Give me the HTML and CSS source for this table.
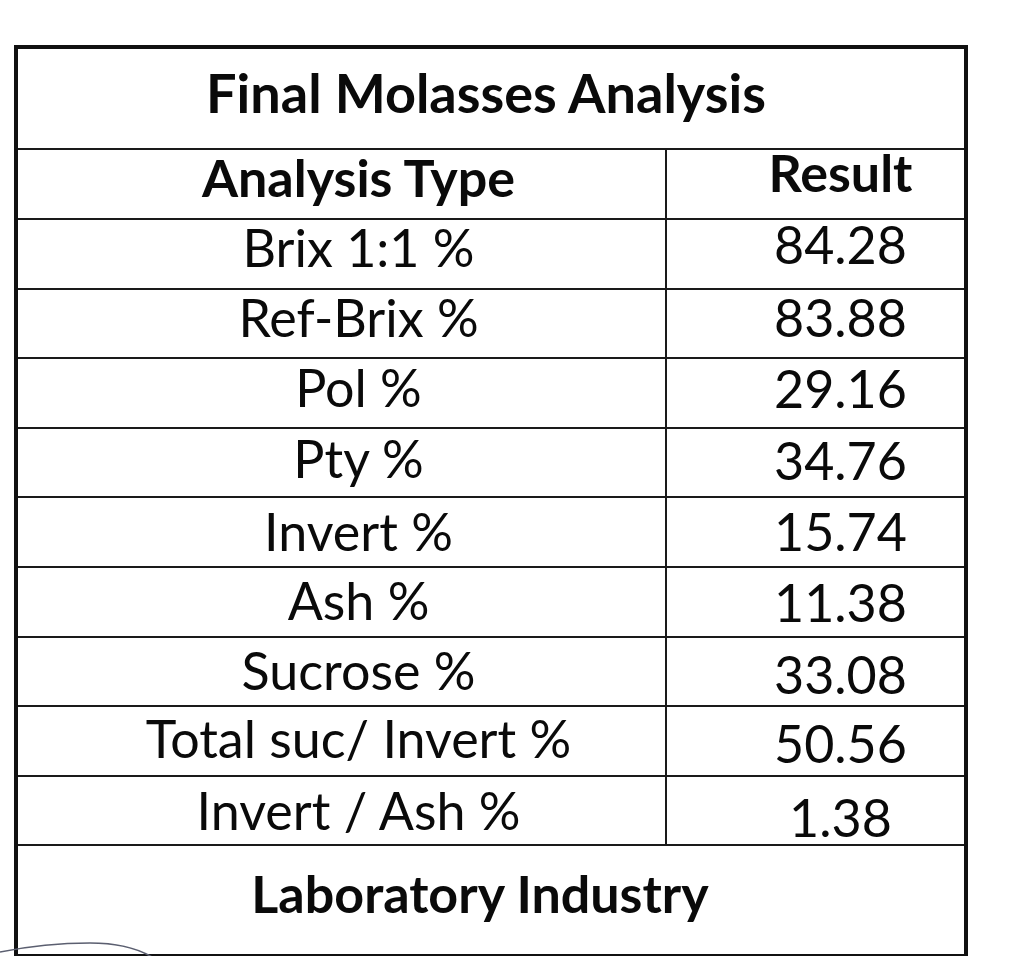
FILE: index.html
```html
<!DOCTYPE html>
<html lang="en">
<head>
<meta charset="utf-8">
<title>Final Molasses Analysis</title>
<link rel="stylesheet" href="styles.css">
</head>
<body>
<div class="page">
  <table class="sheet">
    <colgroup><col class="col-type"><col class="col-res"></colgroup>
    <tr class="title-row"><th colspan="2" class="title">Final Molasses Analysis</th></tr>
    <tr class="head-row"><th class="c-type">Analysis Type</th><th class="c-res">Result</th></tr>
    <tr class="row"><td class="c-type">Brix 1:1 %</td><td class="c-res">84.28</td></tr>
    <tr class="row"><td class="c-type">Ref-Brix %</td><td class="c-res">83.88</td></tr>
    <tr class="row"><td class="c-type">Pol %</td><td class="c-res">29.16</td></tr>
    <tr class="row"><td class="c-type">Pty %</td><td class="c-res">34.76</td></tr>
    <tr class="row"><td class="c-type">Invert %</td><td class="c-res">15.74</td></tr>
    <tr class="row"><td class="c-type">Ash %</td><td class="c-res">11.38</td></tr>
    <tr class="row"><td class="c-type">Sucrose %</td><td class="c-res">33.08</td></tr>
    <tr class="row"><td class="c-type">Total suc/ Invert %</td><td class="c-res">50.56</td></tr>
    <tr class="row"><td class="c-type">Invert / Ash %</td><td class="c-res">1.38</td></tr>
    <tr class="foot-row"><th colspan="2" class="foot">Laboratory Industry</th></tr>
  </table>
  <svg class="scribble" width="170" height="30" viewBox="0 0 170 30" aria-hidden="true">
    <path d="M0 24 C 30 18, 60 15, 90 15 C 115 15, 135 19, 152 29" fill="none" stroke="#5b5f70" stroke-width="1.6"/>
  </svg>
</div>
</body>
</html>
```
FILE: styles.css
```css
html, body {
  margin: 0;
  padding: 0;
  background: #ffffff;
}
body {
  width: 1010px;
  height: 956px;
  overflow: hidden;
  font-family: Lato, "Open Sans", "Liberation Sans", sans-serif;
  color: #0a0a0a;
}
.page {
  position: relative;
  padding: 45px 0 0 14px;
}
.sheet {
  border-collapse: collapse;
  width: 954px;
  border: 4px solid #111;
  table-layout: fixed;
}
.col-type { width: 650px; }
.sheet th, .sheet td {
  border: 2px solid #1a1a1a;
  padding: 0 0 3px 0;
  text-align: center;
  vertical-align: middle;
  font-size: 52px;
  line-height: 40px;
  white-space: nowrap;
}
.sheet th { font-weight: 700; }
.sheet td { font-weight: 400; }
.c-type { padding-left: 34px !important; }
.c-res { padding-left: 50px !important; }

.title-row { height: 102px; }
.head-row { height: 70px; }
.row { height: 69.6px; }
.foot-row { height: 111px; }

.title { font-size: 54px !important; padding: 0 10px 12px 0 !important; }
.head-row .c-type { padding-bottom: 14px; }
.head-row .c-res { padding-bottom: 24px; }
.foot { padding: 0 22px 15px 0 !important; }

/* photo-matched vertical offsets, left column */
.row:nth-child(3) .c-type,
.row:nth-child(4) .c-type { padding-bottom: 13px; }
.row:nth-child(5) .c-type { padding-bottom: 11px; }
.row:nth-child(6) .c-type { padding-bottom: 10px; }
.row:nth-child(10) .c-type { padding-bottom: 6px; }
.row:nth-child(11) .c-type { padding-bottom: 2px; }

/* photo-matched vertical offsets, right column */
.row:nth-child(3) .c-res { padding-bottom: 19px; }
.row:nth-child(4) .c-res { padding-bottom: 13px; }
.row:nth-child(5) .c-res { padding-bottom: 9px; }
.row:nth-child(6) .c-res { padding-bottom: 6px; }
.row:nth-child(8) .c-res { padding-top: 1px; padding-bottom: 0; }
.row:nth-child(9) .c-res,
.row:nth-child(10) .c-res { padding-top: 5px; padding-bottom: 0; }
.row:nth-child(11) .c-res { padding-top: 13px; padding-bottom: 0; }

.scribble {
  position: absolute;
  left: 0;
  top: 928px;
}
```
